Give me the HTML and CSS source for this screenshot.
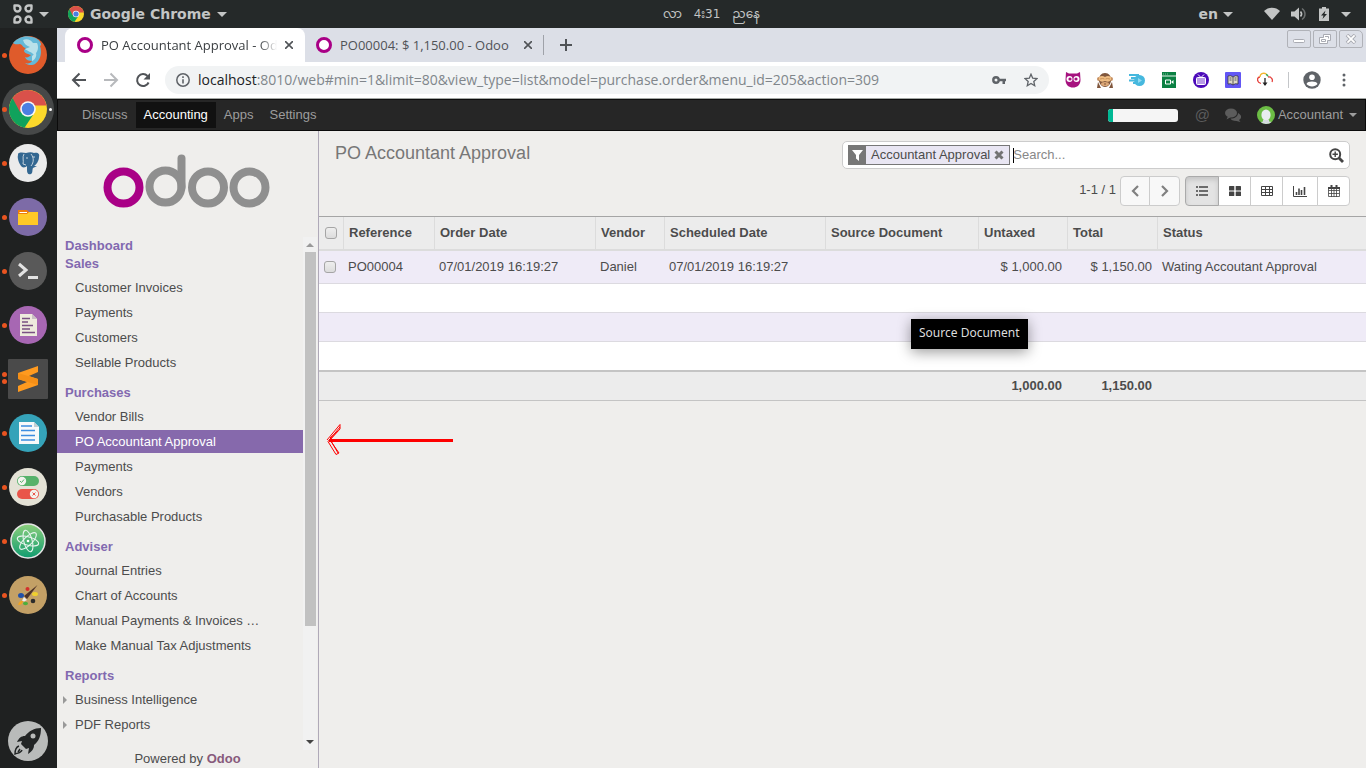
FILE: index.html
```html
<!DOCTYPE html>
<html lang="en">
<head>
<meta charset="utf-8">
<title>PO Accountant Approval - Odoo</title>
<link rel="stylesheet" href="styles.css">
</head>
<body>
<div class="desktop">
  <header class="topbar">
    <div class="topbar-left">
      <button class="sys-btn activities" aria-label="Activities">
        <svg width="20" height="20" viewBox="0 0 20 20" fill="none" stroke="#c3c5c5" stroke-width="2.4" stroke-linejoin="round"><path d="M1.500 1.500h3a3 3 0 1 1-3 3zM18.500 1.500h-3a3 3 0 1 0 3 3zM1.500 18.500h3a3 3 0 1 0-3-3zM18.500 18.500h-3a3 3 0 1 1 3-3z"/></svg>
        <span class="caret"></span>
      </button>
      <button class="sys-btn app-menu">
        <svg width="16" height="16" viewBox="0 0 38 38"><use href="#chrome"/></svg>
        <span>Google Chrome</span>
        <span class="caret"></span>
      </button>
    </div>
    <div class="clock" lang="my"><span>လာ</span><span>4း31</span><span>ညနေ</span></div>
    <div class="topbar-right">
      <button class="sys-btn lang-btn"><span>en</span><span class="caret"></span></button>
      <svg width="16" height="14" viewBox="0 0 16 14"><path d="M0 4C4-.5 12-.5 16 4L8 13z" fill="#c3c5c5"/></svg>
      <svg width="16" height="14" viewBox="0 0 16 14"><path d="M0 4.500h3.500L8 .5v13L3.500 9.500H0z" fill="#c3c5c5"/><path d="M9.500 4.500q2.200 2.500 0 5" fill="none" stroke="#c3c5c5" stroke-width="1.600"/><path d="M11 1.500c4 2.800 4 8.200 0 11" fill="none" stroke="#6c6f6f" stroke-width="1.500"/></svg>
      <svg width="12" height="14" viewBox="0 0 12 14"><path d="M1 1.500h3V0h4v1.500h3V14H1z" fill="#c3c5c5"/><path d="M7.500 3.500L3 8.500h2.500L4.500 12 9 7H6.500z" fill="#252929"/></svg>
      <span class="caret"></span>
    </div>
  </header>

  <nav class="dock" aria-label="Launcher">
    <div class="dock-item"><i class="dot"></i>
      <svg class="dock-icon" viewBox="0 0 38 38"><circle cx="19" cy="19" r="19" fill="#df5b2b"/><path d="M4 7C9 1 17-1 23 1c6 1 9 5 9 8l-1 1c2 6 1 14-5 18-3 2-8 1-10-1 3 1 6 0 7-2-3 0-6-1-7-4 2 1 4 0 6-2-2-1-6-1-7-4 0-1 1-2 2-3-3 0-3-3-6-4-2 0-5 1-7-1z" fill="#64b9d8"/><path d="M14 4c4-2 8 0 10 3l4 0c2 4 1 9-3 12-2-3-7-4-9-6l5-2c-3-1-6-3-7-7zM23 20l4-3c1 3-1 7-4 8z" fill="#b9e1ea"/></svg>
    </div>
    <div class="dock-item active"><i class="dot"></i>
      <svg class="dock-icon" viewBox="0 0 38 38">
        <g id="chrome"><circle cx="19" cy="19" r="19" fill="#fcd92b"/><path d="M19 19L15.500 37.700A19 19 0 0 1 3.500 8z" fill="#10a25c"/><path d="M24 25L15.500 37.700 9 22z" fill="#10a25c"/><path d="M3.500 8A19 19 0 0 1 37.600 15.500H19L11 22z" fill="#d9514a"/><circle cx="19" cy="19" r="7.800" fill="#f7f7f7"/><circle cx="19" cy="19" r="6.200" fill="#4a7fe2"/></g>
      </svg><i class="dot focus"></i>
    </div>
    <div class="dock-item"><i class="dot"></i>
      <svg class="dock-icon" viewBox="0 0 38 38"><circle cx="19" cy="19" r="19" fill="#ebebeb"/><path d="M10 9c3-1 5 0 7 0 3-1 6-1 8 0 4-1 6 1 5 4 0 4-3 8-5 9h3l-4 2c-1 2 0 5-2 6-3 1-4-1-4-4v-4c-1 1-3 2-5 1-3-3-5-9-4-12 0-1 0-2 1-2z" fill="#336791"/><path d="M15 10c-2 3 0 7-1 10l3 1M22 10c3 4 3 8 0 12M17 14h2M24 13h2" fill="none" stroke="#e6ebef" stroke-width=".8"/></svg>
    </div>
    <div class="dock-item"><i class="dot"></i>
      <svg class="dock-icon" viewBox="0 0 38 38"><circle cx="19" cy="19" r="19" fill="#7d6ba7"/><path d="M9 12h9l2 2h9v3H9z" fill="#ef7d0b"/><path d="M9 16h9l2-2h9v13H9z" fill="#ffc927"/><path d="M11 14h7v1h-8z" fill="#fff"/></svg>
    </div>
    <div class="dock-item"><i class="dot"></i>
      <svg class="dock-icon" viewBox="0 0 38 38"><circle cx="19" cy="19" r="19" fill="#595959"/><path d="M10 12l7 6-7 6" fill="none" stroke="#e3e3e3" stroke-width="3"/><path d="M19 24h10v3H19z" fill="#e3e3e3"/></svg>
    </div>
    <div class="dock-item"><i class="dot"></i>
      <svg class="dock-icon" viewBox="0 0 38 38"><circle cx="19" cy="19" r="19" fill="#a767b3"/><path d="M11 8h12l5 5v17H11z" fill="#eeeadd"/><path d="M23 8l5 5h-5z" fill="#c9bfc4"/><path d="M13 12.500h8M13 16h6M13 19.500h11M13 23h8M13 26.500h13" stroke="#7a5083" stroke-width="1.500"/></svg>
    </div>
    <div class="dock-item"><i class="dot pair"></i>
      <svg class="dock-square" viewBox="0 0 40 40"><rect width="40" height="40" rx="1" fill="#4a4a4a"/><path d="M10 14l20-7v6l-9 4 9 3v6l-20 7v-6l9-4-9-3z" fill="#ff9a1f"/><path d="M10 14l20 6v6l-20-6z" fill="#f58f17"/></svg>
    </div>
    <div class="dock-item"><i class="dot"></i>
      <svg class="dock-icon" viewBox="0 0 38 38"><circle cx="19" cy="19" r="19" fill="#35a3b9"/><path d="M10 8h15l5 5v17H10z" fill="#f7f9fa"/><path d="M25 8l5 5h-5z" fill="#c4cfd3"/><path d="M12 12h11M12 16.500h14M12 21.500h14M12 26h14" stroke="#3c8de0" stroke-width="1.300"/></svg>
    </div>
    <div class="dock-item"><i class="dot"></i>
      <svg class="dock-icon" viewBox="0 0 38 38"><circle cx="19" cy="19" r="19" fill="#e4e2d6"/><rect x="8" y="8" width="22" height="10" rx="5" fill="#57b26a"/><circle cx="13" cy="13" r="4.200" fill="#f3f3ee"/><path d="M11 13l1.500 1.500L15 11.500" fill="none" stroke="#57b26a"/><rect x="8" y="21" width="22" height="10" rx="5" fill="#e9554a"/><circle cx="25" cy="26" r="4.200" fill="#f3f3ee"/><path d="M23.500 24.500l3 3m0-3l-3 3" stroke="#e9554a"/></svg>
    </div>
    <div class="dock-item"><i class="dot"></i>
      <svg class="dock-icon" viewBox="0 0 38 38"><defs><linearGradient id="atom" x2="0" y2="1"><stop stop-color="#8ccf7c"/><stop offset="1" stop-color="#109c70"/></linearGradient></defs><circle cx="19" cy="19" r="17" fill="url(#atom)" stroke="#e5e5e5" stroke-width="1.500"/><g fill="none" stroke="#e9f5ef" stroke-width="1.100"><ellipse cx="19" cy="19" rx="11" ry="4.200" transform="rotate(15 19 19)"/><ellipse cx="19" cy="19" rx="11" ry="4.200" transform="rotate(75 19 19)"/><ellipse cx="19" cy="19" rx="11" ry="4.200" transform="rotate(135 19 19)"/></g><circle cx="19" cy="19" r="1.300" fill="#fff"/></svg>
    </div>
    <div class="dock-item"><i class="dot"></i>
      <svg class="dock-icon" viewBox="0 0 38 38"><circle cx="19" cy="19" r="19" fill="#c3a066"/><circle cx="18.500" cy="13" r="2" fill="#d3302c"/><ellipse cx="12" cy="19.500" rx="3" ry="2.500" fill="#2250a8"/><ellipse cx="26" cy="18" rx="3" ry="2" fill="#f0d02e"/><circle cx="24" cy="25" r="2.300" fill="#2b2b2b"/><ellipse cx="16.500" cy="27.500" rx="2.500" ry="1.800" fill="#4caf3c"/><path d="M9 29c1-4 3-4 5-4-1 3-2 4-5 4z" fill="#f2a41e"/><path d="M28.500 9L15 20l3 3z" fill="#4e3328"/><path d="M15 21l3 3-3 1.500-2-1z" fill="#eee"/></svg>
    </div>
    <div class="dock-item dock-last">
      <svg class="dock-square" viewBox="0 0 40 40"><circle cx="20" cy="20" r="20" fill="#b9bbba"/><path d="M33 7c-7 0-12 3-16 8-4 0-6 2-8 6l5-1-1 3 5 5 3-1-1 6c4-3 6-5 6-9 5-4 7-9 7-17z" fill="#222525"/><circle cx="25" cy="15" r="2.500" fill="#b9bbba"/><path d="M11 25c-3 1-4 4-4 8 3-1 6-1 7-4M12 28l-2 3" fill="none" stroke="#222525" stroke-width="1.400"/></svg>
    </div>
  </nav>

  <div class="browser">
    <div class="tabstrip">
      <div class="tab tab-active">
        <i class="favicon"></i><span class="tab-title fade">PO Accountant Approval - Odoo</span>
        <button class="tab-close" aria-label="Close tab"><svg width="8" height="8" viewBox="0 0 8 8"><path d="M0 0l8 8M8 0L0 8" stroke="#505357" stroke-width="1.600"/></svg></button>
      </div>
      <div class="tab tab-second">
        <i class="favicon"></i><span class="tab-title">PO00004: $ 1,150.00 - Odoo</span>
        <button class="tab-close" aria-label="Close tab"><svg width="8" height="8" viewBox="0 0 8 8"><path d="M0 0l8 8M8 0L0 8" stroke="#505357" stroke-width="1.600"/></svg></button>
      </div>
      <button class="new-tab" aria-label="New tab"><svg width="12" height="12" viewBox="0 0 12 12"><path d="M6 0v12M0 6h12" stroke="#505357" stroke-width="2"/></svg></button>
      <div class="win-buttons">
        <button class="win-btn" aria-label="Minimize"><svg width="12" height="10" viewBox="0 0 12 10"><rect x=".5" y="5.500" width="11" height="3" rx="1" fill="#fff" stroke="#a9abb2"/></svg></button>
        <button class="win-btn" aria-label="Restore"><svg width="12" height="10" viewBox="0 0 12 10"><path d="M4.500.5h7v6h-3v3h-8v-6h4z" fill="#fff" stroke="#a9abb2"/><path d="M2.500 5.500h4v2h-4zM6 2.500h3.500v2" fill="none" stroke="#a9abb2"/></svg></button>
        <button class="win-btn win-close" aria-label="Close"><svg width="12" height="10" viewBox="0 0 12 10"><path d="M2 1l8 8M10 1L2 9" stroke="#a9abb2" stroke-width="3.600"/><path d="M2.400 1.400l7.200 7.200M9.600 1.400L2.400 8.600" stroke="#fff" stroke-width="1.800"/></svg></button>
      </div>
    </div>

    <div class="toolbar">
      <button class="tool" aria-label="Back"><svg width="16" height="16" viewBox="0 0 16 16" fill="none" stroke="#505357" stroke-width="2"><path d="M15 8H2M8.500 1.500L2 8l6.500 6.500"/></svg></button>
      <button class="tool" aria-label="Forward"><svg width="16" height="16" viewBox="0 0 16 16" fill="none" stroke="#b7b9bc" stroke-width="2"><path d="M1 8h13M7.500 1.500L14 8l-6.500 6.500"/></svg></button>
      <button class="tool" aria-label="Reload"><svg width="16" height="16" viewBox="0 0 16 16"><path d="M13.600 10.500A6 6 0 1 1 12.500 4" fill="none" stroke="#505357" stroke-width="2"/><path d="M15 1v6.500H8.500z" fill="#505357"/></svg></button>
      <div class="omnibox">
        <svg width="14" height="14" viewBox="0 0 14 14"><circle cx="7" cy="7" r="6.200" fill="none" stroke="#5f6368" stroke-width="1.500"/><path d="M7 6.200v4.300M7 3.200v1.700" stroke="#5f6368" stroke-width="1.600"/></svg>
        <div class="url"><span class="host">localhost</span>:8010/web#min=1&amp;limit=80&amp;view_type=list&amp;model=purchase.order&amp;menu_id=205&amp;action=309</div>
        <svg class="key" width="14" height="10" viewBox="0 0 14 10"><circle cx="4" cy="5" r="2.700" fill="none" stroke="#5f6368" stroke-width="2.400"/><path d="M6 3.700h8v2.600h-1V9h-2.500V6.300H6z" fill="#5f6368"/></svg>
        <svg width="14" height="14" viewBox="0 0 14 14"><path d="M7 1.200l1.700 4 4.300.4-3.200 2.900.9 4.200L7 10.500l-3.700 2.200.9-4.200L1 5.600l4.300-.4z" fill="none" stroke="#5f6368" stroke-width="1.300"/></svg>
      </div>
      <button class="tool" aria-label="Odoo debug"><svg width="16" height="16" viewBox="0 0 16 16"><path d="M1 0l3 1.500h8L15 0l.5 8c0 5-3.500 7.500-7.500 7.500S.5 13 .5 8z" fill="#a6127f"/><circle cx="4.500" cy="7" r="3" fill="#fff"/><circle cx="11.500" cy="7" r="3" fill="#fff"/><circle cx="5" cy="7" r="1.600" fill="#a6127f"/><circle cx="11" cy="7" r="1.600" fill="#a6127f"/></svg></button>
      <button class="tool" aria-label="Monkey"><svg width="16" height="16" viewBox="0 0 16 16"><circle cx="2" cy="7" r="2" fill="#c79162"/><circle cx="14" cy="7" r="2" fill="#c79162"/><path d="M8 1c4 0 6 3 6 7s-3 7-6 7-6-3-6-7 2-7 6-7z" fill="#80573d"/><path d="M2 5q3-2 6 0 3-2 6 0v3q-2 3-6 1-4 2-6-1z" fill="#efbd83"/><path d="M3 7q3-1 4.500 0M13 7q-3-1-4.500 0" fill="none" stroke="#c89158"/><ellipse cx="8" cy="12" rx="4" ry="2" fill="#dba777"/><path d="M7 12h2" stroke="#80573d"/><path d="M1 10l3 6H0zM15 10l-3 6h4z" fill="#80573d"/></svg></button>
      <button class="tool" aria-label="Video speed"><svg width="16" height="14" viewBox="0 0 16 14"><circle cx="10.500" cy="7.500" r="5.500" fill="#46b8de"/><path d="M0 2h10M2 5h6M0 7.500h5M4 10h5" stroke="#46b8de" stroke-width="1.800"/><path d="M9 5l4 2.500L9 10z" fill="#8fd9f0"/></svg></button>
      <button class="tool" aria-label="Screen recorder"><svg width="16" height="16" viewBox="0 0 16 16"><path d="M1 0h14v16H1z" fill="#0b8043"/><path d="M1 4h14" stroke="#e8f3ec"/><path d="M2 2h5" stroke="#7fbd9a" stroke-dasharray="1 1"/><path d="M4.500 8h5v4h-5z" fill="none" stroke="#fff"/><path d="M10 10l2.500-2v4z" fill="#fff"/></svg></button>
      <button class="tool" aria-label="Video"><svg width="16" height="16" viewBox="0 0 16 16"><circle cx="8" cy="8" r="8" fill="#4b09b9"/><rect x="3.500" y="5.500" width="9" height="7" rx="1" fill="#b79be6" stroke="#fff"/><path d="M5 2.500L8 5.500l3-3" fill="none" stroke="#fff"/></svg></button>
      <button class="tool" aria-label="Dictionary"><svg width="16" height="16" viewBox="0 0 16 16"><rect width="16" height="16" rx="1" fill="#6256f4"/><path d="M3 4q3-1 5 1 2-2 5-1v8q-3-1-5 1-2-2-5-1z" fill="#ded9c7" stroke="#35323f" stroke-width=".8"/><path d="M8 5v8M4.500 6h2M4.500 8h2M9.500 6h2M9.500 8h2" stroke="#35323f" stroke-width=".8"/></svg></button>
      <button class="tool" aria-label="Downloads"><svg width="16" height="16" viewBox="0 0 16 16" fill="none" stroke-width="1.300"><path d="M4 11.500C-1 10 0 5 3 5" stroke="#e5413c"/><path d="M3 5c0-4 5-5 7-2" stroke="#f4b731"/><path d="M9 2.500q2 .5 2 2" stroke="#35a852"/><path d="M11 5c4-.5 5 3 4 5" stroke="#e5413c"/><path d="M8 6v7" stroke="#222"/><path d="M5.500 10.500h5L8 14z" fill="#222"/></svg></button>
      <i class="tool-sep"></i>
      <button class="tool" aria-label="Profile"><svg width="18" height="18" viewBox="0 0 18 18"><circle cx="9" cy="9" r="8.700" fill="#5f6368"/><circle cx="9" cy="6.200" r="2.800" fill="#fff"/><path d="M3.500 13c1-3.200 10-3.200 11 0-2.500 3.300-8.500 3.300-11 0z" fill="#fff"/></svg></button>
      <button class="tool" aria-label="Menu"><svg width="4" height="14" viewBox="0 0 4 14" fill="#5f6368"><circle cx="2" cy="2" r="1.500"/><circle cx="2" cy="7" r="1.500"/><circle cx="2" cy="12" r="1.500"/></svg></button>
    </div>

    <div class="odoo">
      <nav class="navbar">
        <a href="#">Discuss</a><a href="#" class="current">Accounting</a><a href="#">Apps</a><a href="#">Settings</a>
        <div class="navbar-right">
          <div class="planner" role="progressbar" aria-label="Setup" aria-valuenow="7"><i></i></div>
          <button class="nav-at" aria-label="Mentions">@</button>
          <button class="nav-chat" aria-label="Conversations"><svg width="16" height="14" viewBox="0 0 16 14" fill="#5c5c5c"><ellipse cx="6" cy="5" rx="6" ry="4.500"/><path d="M3 8l-1.500 3.500L6 9zM13 5c4 2 4 5 1 7l1.500 2-4-1C8 13 6 12 5.500 10.500 10 10.500 13 8.500 13 5z"/></svg></button>
          <button class="user">
            <svg width="18" height="18" viewBox="0 0 18 18"><defs><clipPath id="ava"><circle cx="9" cy="9" r="9"/></clipPath></defs><g clip-path="url(#ava)"><path d="M0 0h18v18H0z" fill="#6cbd45"/><ellipse cx="9" cy="9" rx="4.600" ry="5.600" fill="#e9edf0"/><path d="M6 14h6v1.500c3 .5 4 1 4 2.500H2c0-1.500 1-2 4-2.500z" fill="#d5dbe0"/></g></svg>
            <span>Accountant</span><span class="caret small"></span>
          </button>
        </div>
      </nav>

      <div class="odoo-body">
        <aside class="sidebar">
          <div class="logo">
            <svg width="168" height="54" viewBox="0 0 168 54" fill="none" stroke="#8f8f8f" stroke-width="8" role="img" aria-label="odoo"><circle cx="20.500" cy="33.500" r="16" stroke="#a90086"/><circle cx="62.500" cy="32.500" r="16"/><path d="M78.500 33V4.500" stroke-linecap="round"/><circle cx="105" cy="33.500" r="16"/><circle cx="146.500" cy="33.500" r="16"/></svg>
          </div>
          <div class="menu-wrap">
            <div class="menu">
              <h2>Dashboard</h2>
              <h2>Sales</h2>
              <ul>
                <li><a href="#">Customer Invoices</a></li>
                <li><a href="#">Payments</a></li>
                <li><a href="#">Customers</a></li>
                <li><a href="#">Sellable Products</a></li>
              </ul>
              <h2>Purchases</h2>
              <ul>
                <li><a href="#">Vendor Bills</a></li>
                <li><a href="#" class="selected">PO Accountant Approval</a></li>
                <li><a href="#">Payments</a></li>
                <li><a href="#">Vendors</a></li>
                <li><a href="#">Purchasable Products</a></li>
              </ul>
              <h2>Adviser</h2>
              <ul>
                <li><a href="#">Journal Entries</a></li>
                <li><a href="#">Chart of Accounts</a></li>
                <li><a href="#">Manual Payments &amp; Invoices …</a></li>
                <li><a href="#">Make Manual Tax Adjustments</a></li>
              </ul>
              <h2>Reports</h2>
              <ul>
                <li><a href="#" class="parent">Business Intelligence</a></li>
                <li><a href="#" class="parent">PDF Reports</a></li>
              </ul>
            </div>
            <div class="scrollbar">
              <i class="arrow-up"></i><i class="thumb"></i><i class="arrow-down"></i>
            </div>
          </div>
          <footer class="powered">Powered by <a href="#">Odoo</a></footer>
        </aside>

        <main class="content">
          <svg class="pointer" width="128" height="34" viewBox="0 0 128 34" fill="none" stroke="#fe0000"><path d="M3 17.500h124" stroke-width="3"/><path d="M1 17L14 1.500V6L4 17l9 13-3 1.500L2 18.500 14 4M4 15L12 8M5 18l7 12"/></svg>
          <section class="control-panel">
            <h1>PO Accountant Approval</h1>
            <div class="controls">
              <div class="search">
                <div class="facet">
                  <span class="facet-icon"><svg width="11" height="11" viewBox="0 0 11 11"><path d="M0 0h11L7 5v6L4 8.500V5z" fill="#fff"/></svg></span>
                  <span class="facet-label">Accountant Approval</span>
                  <button class="facet-x" aria-label="Remove filter"><svg width="10" height="10" viewBox="0 0 10 10"><path d="M1.500 1.500l7 7M8.500 1.500l-7 7" stroke="#737373" stroke-width="3"/></svg></button>
                </div>
                <i class="cursor"></i>
                <input type="text" placeholder="Search..." aria-label="Search">
                <button class="search-more" aria-label="Advanced search"><svg width="15" height="15" viewBox="0 0 15 15" fill="none" stroke="#444"><circle cx="6.200" cy="6.200" r="5" stroke-width="2"/><path d="M10 10l4 4" stroke-width="2.800"/><path d="M6.200 3.500v5.400M3.500 6.200h5.400" stroke-width="1.400"/></svg></button>
              </div>
              <div class="pager-row">
                <span class="pager">1-1 / 1</span>
                <div class="group pager-btns">
                  <button aria-label="Previous"><svg width="8" height="12" viewBox="0 0 8 12"><path d="M7 1L2 6l5 5" fill="none" stroke="#808080" stroke-width="2.200"/></svg></button>
                  <button aria-label="Next"><svg width="8" height="12" viewBox="0 0 8 12"><path d="M1 1l5 5-5 5" fill="none" stroke="#808080" stroke-width="2.200"/></svg></button>
                </div>
                <div class="group views">
                  <button class="on" aria-label="List"><svg width="12" height="10" viewBox="0 0 12 10"><path d="M0 1h2M3 1h9M0 5h2M3 5h9M0 9h2M3 9h9" stroke="#444" stroke-width="1.600"/></svg></button>
                  <button aria-label="Kanban"><svg width="12" height="10" viewBox="0 0 12 10" fill="#444"><rect width="5.300" height="4.500" rx=".6"/><rect x="6.700" width="5.300" height="4.500" rx=".6"/><rect y="5.500" width="5.300" height="4.500" rx=".6"/><rect x="6.700" y="5.500" width="5.300" height="4.500" rx=".6"/></svg></button>
                  <button aria-label="Pivot"><svg width="12" height="10" viewBox="0 0 12 10"><path d="M.5.5h11v9H.5zM.5 3.500h11M.5 6.500h11M4.500.5v9M8.500.5v9" fill="none" stroke="#444"/></svg></button>
                  <button aria-label="Graph"><svg width="14" height="11" viewBox="0 0 14 11"><path d="M.5 0v10.500H14" fill="none" stroke="#444"/><path d="M3.500 9V6M6 9V2.500M8.500 9V4M11.500 9V1" stroke="#444" stroke-width="1.600"/></svg></button>
                  <button aria-label="Calendar"><svg width="12" height="12" viewBox="0 0 12 12"><path d="M.5 2.500h11v9H.5zM.5 5.500h11M.5 8.500h11M3.500 4v8M6 4v8M8.500 4v8" fill="none" stroke="#444" stroke-width=".8"/><path d="M0 2h12v2H0zM2.500 0h2v2h-2zM7.500 0h2v2h-2z" fill="#444"/></svg></button>
                </div>
              </div>
            </div>
          </section>
          <div class="list">
            <table>
              <colgroup><col class="c-check"><col class="c-ref"><col class="c-date"><col class="c-vendor"><col class="c-date"><col class="c-source"><col class="c-untaxed"><col class="c-total"><col></colgroup>
              <thead>
                <tr><th class="check"><input type="checkbox" aria-label="Select all"></th><th>Reference</th><th>Order Date</th><th>Vendor</th><th>Scheduled Date</th><th>Source Document</th><th>Untaxed</th><th>Total</th><th>Status</th></tr>
              </thead>
              <tbody>
                <tr class="record"><td class="check"><input type="checkbox" aria-label="Select PO00004"></td><td>PO00004</td><td>07/01/2019 16:19:27</td><td>Daniel</td><td>07/01/2019 16:19:27</td><td></td><td class="num">$ 1,000.00</td><td class="num">$ 1,150.00</td><td>Wating Accoutant Approval</td></tr>
                <tr><td colspan="9"></td></tr>
                <tr><td colspan="9"></td></tr>
                <tr><td colspan="9"></td></tr>
              </tbody>
              <tfoot>
                <tr><td></td><td></td><td></td><td></td><td></td><td></td><td class="num">1,000.00</td><td class="num">1,150.00</td><td></td></tr>
              </tfoot>
            </table>
            <div class="tooltip" role="tooltip">Source Document</div>
          </div>
        </main>
      </div>
    </div>
  </div>
</div>
</body>
</html>
```
FILE: styles.css
```css
* { box-sizing: border-box; }
body { margin: 0; font: 13px/18px "Liberation Sans", Arial, sans-serif; color: #4c4c4c; }
button { padding: 0; border: 0; background: none; font: inherit; color: inherit; display: flex; align-items: center; justify-content: center; }
svg { display: block; flex: none; }
a { color: inherit; text-decoration: none; }

.desktop { display: grid; grid-template: 28px 1fr / 57px 1fr; height: 100vh; min-height: 640px; overflow: hidden; background: #1f2121; }

/* system bar */
.topbar { grid-column: 1 / 3; display: grid; grid-template-columns: 1fr auto 1fr; align-items: center; background: #252929; color: #c3c5c5; font: bold 14px/18px "DejaVu Sans", sans-serif; }
.topbar-left, .topbar-right { display: flex; align-items: center; }
.topbar-left { padding-left: 13px; gap: 19px; }
.topbar-right { justify-content: flex-end; gap: 11px; padding-right: 15px; }
.sys-btn { gap: 6px; }
.lang-btn { margin-right: 20px; gap: 5px; }
.caret { width: 0; height: 0; border: 5px solid transparent; border-top-color: #c3c5c5; border-bottom: 0; }
.caret.small { border-width: 4px 4px 0; border-top-color: #9d9d9d; }
.clock { display: flex; gap: 12px; padding-left: 57px; font: 12px/18px "DejaVu Sans", "Noto Sans Myanmar", sans-serif; }

/* launcher */
.dock { display: flex; flex-direction: column; }
.dock-item { position: relative; height: 54px; flex: none; display: flex; align-items: center; justify-content: center; padding-right: 1px; }
.dock-last { margin-top: auto; }
.dock-icon { width: 38px; height: 38px; position: relative; }
.dock-square { width: 40px; height: 40px; }
.dot { position: absolute; left: 2px; width: 5px; height: 5px; border-radius: 50%; background: #e95420; }
.dot.pair { top: 20px; box-shadow: 0 7px #e95420; }
.dot.focus { left: auto; right: 5px; width: 3px; height: 3px; background: #fff; }
.dock-item.active::before { content: ""; position: absolute; left: 2px; top: 1px; width: 52px; height: 52px; border-radius: 50%; background: #464848; }

/* browser chrome */
.browser { display: flex; flex-direction: column; min-width: 0; min-height: 0; background: #fff; }
.tabstrip { display: flex; height: 34px; flex: none; align-items: center; padding-left: 8px; background: #dcdfe7; color: #505357; font: 13px/18px "Open Sans", sans-serif; }
.tab { display: flex; align-items: center; width: 240px; height: 34px; padding: 0 12px; }
.tab-active { background: #fff; border-radius: 8px 8px 0 0; color: #3c4043; }
.tab-second { width: 238px; padding: 0 11px; }
.favicon { width: 16px; height: 16px; flex: none; border: 3px solid #a90086; border-radius: 50%; background: #fff; }
.tab-title { flex: 1; margin: 0 8px; white-space: nowrap; overflow: hidden; }
.fade { -webkit-mask-image: linear-gradient(90deg, #000 90%, transparent); mask-image: linear-gradient(90deg, #000 90%, transparent); }
.tab-close { width: 8px; height: 16px; }
.new-tab { height: 20px; padding-left: 16px; border-left: 1px solid #9fa2a9; }
.win-buttons { display: flex; gap: 2px; margin: 0 3px 12px auto; }
.win-btn { width: 24px; height: 18px; border: 1px solid #b0b2b8; border-radius: 2px; }
.win-close { border-top-right-radius: 5px; }
.toolbar { display: flex; align-items: center; height: 37px; flex: none; padding: 0 6px; border-bottom: 1px solid #a3a7a4; }
.tool { width: 32px; height: 32px; flex: none; }
.tool-sep { width: 1px; height: 16px; margin: 0 7px; background: #c4c6c9; }
.omnibox { flex: 1; min-width: 0; display: flex; align-items: center; gap: 8px; height: 28px; margin: 0 8px 0 6px; padding: 0 11px; border-radius: 14px; background: #f1f3f4; color: #80868b; font: 14px/20px "Open Sans", sans-serif; }
.url { flex: 1; white-space: nowrap; overflow: hidden; }
.host { color: #202124; }
.key { margin-right: 10px; }

/* application */
.odoo { flex: 1; min-height: 0; display: flex; flex-direction: column; background: #efeeec; }
.navbar { display: flex; align-items: center; height: 32px; flex: none; padding: 0 8px 0 16px; border: 1px solid #0b0b0b; background: #262626; color: #9d9d9d; }
.navbar > a { padding: 4px 8px; }
.navbar > .current { background: #111; color: #fff; }
.navbar-right { margin-left: auto; display: flex; align-items: center; }
.planner { width: 70px; height: 13px; border-radius: 3px; background: #f5f5f5; overflow: hidden; }
.planner i { display: block; width: 5px; height: 13px; background: #00b894; }
.nav-at { margin-left: 17px; color: #5c5c5c; font-size: 15px; }
.nav-chat { margin: 0 16px 0 15px; }
.user { gap: 3px; }
.user .caret { margin-left: 3px; }
.odoo-body { flex: 1; min-height: 0; display: flex; }
.sidebar { width: 262px; flex: none; display: flex; flex-direction: column; border-right: 1px solid #afa9b8; }
.logo { padding: 23px 0 29px 46px; }
.menu-wrap { flex: 1; min-height: 0; display: flex; padding-right: 1px; }
.menu { flex: 1; min-width: 0; overflow: hidden; }
.menu h2 { margin: 0; padding-left: 8px; font-size: 13px; line-height: 18px; color: #8269b0; }
.menu ul { list-style: none; margin: 3px 0 10px; padding: 0; display: grid; gap: 2px; }
.menu a { display: flex; align-items: center; height: 23px; padding-left: 18px; white-space: nowrap; }
.menu .selected { background: #8669ac; color: #fff; }
.menu .parent { gap: 8px; padding-left: 6px; }
.parent::before { content: ""; border: 4px solid transparent; border-left-color: #999; border-right: 0; }
.scrollbar { width: 14px; display: flex; flex-direction: column; align-items: center; background: #f1f1f1; }
.scrollbar i { flex: none; }
.arrow-up { margin: 6px 0 5px; border: 4px solid transparent; border-bottom-color: #999; border-top: 0; }
.thumb { width: 11px; height: 73%; background: #c1c1c1; }
.arrow-down { margin: auto 0 6px; border: 4px solid transparent; border-top-color: #444; border-bottom: 0; }
.powered { text-align: center; }
.powered a { font-weight: bold; color: #875a7b; }

.content { position: relative; flex: 1; min-width: 0; }
.control-panel { display: flex; justify-content: space-between; align-items: flex-start; padding: 10px 16px; height: 85px; }
.control-panel h1 { margin: 0; font-size: 18px; font-weight: normal; line-height: 24px; color: #777; }
.controls { flex: 0 0 508px; }
.search { display: flex; align-items: center; height: 28px; padding: 0 5px; border: 1px solid #ccc; border-radius: 5px; background: #fff; }
.facet { display: flex; align-items: center; height: 20px; border: 1px solid #777; background: #e9e6f3; }
.facet-icon { display: flex; align-items: center; justify-content: center; width: 17px; height: 18px; background: #777; }
.facet-label { padding: 0 4px 0 5px; white-space: nowrap; }
.facet-x { width: 10px; margin-right: 5px; }
.cursor { width: 1px; height: 15px; margin-left: 3px; margin-right: -1px; background: #000; }
.search input { flex: 1; min-width: 0; padding: 0; border: 0; outline: 0; background: none; font: inherit; }
.search input::placeholder { color: #888; }
.pager-row { display: flex; align-items: center; justify-content: flex-end; margin-top: 7px; }
.pager { margin-right: 4px; margin-bottom: 2px; }
.group { display: flex; }
.group button { height: 30px; border: 1px solid #ccc; background: #fff; width: 33px; margin-left: -1px; }
.group button:first-child { border-radius: 4px 0 0 4px; margin-left: 0; }
.group button:last-child { border-radius: 0 4px 4px 0; }
.pager-btns { margin-right: 5px; }
.pager-btns button { width: 31px; background: #f8f8f8; }
.pager-btns button:first-child { width: 30px; }
.views .on { width: 34px; background: #e3e3e3; border-color: #aaa; box-shadow: inset 0 3px 5px #0002; z-index: 1; }
.views button:nth-child(4) { width: 36px; }

.list { position: relative; border-top: 1px solid #a5a5a5; }
table { width: 100%; table-layout: fixed; border-collapse: separate; border-spacing: 0; }
.c-check { width: 25px; } .c-ref { width: 91px; } .c-date { width: 161px; } .c-vendor { width: 69px; }
.c-source { width: 153px; } .c-untaxed { width: 89px; } .c-total { width: 90px; }
th { height: 34px; padding: 0 5px; text-align: left; background: #ececec; border-bottom: 2px solid #dcdcdc; border-right: 1px solid #dcdcdc; white-space: nowrap; }
th:last-child { border-right: 0; }
td { height: 29px; padding: 0 6px 0 4px; border-bottom: 1px solid #dcdae0; white-space: nowrap; background: #fff; }
.record td { height: 33px; }
tbody tr:nth-child(odd) td { background: #efebf7; }
tbody tr:last-child td { height: 28px; border: 0; }
tfoot td { height: 31px; background: #ececec; border-top: 2px solid #c4c4c4; border-bottom: 1px solid #c4c4c4; font-weight: bold; }
.num { text-align: right; }
td.check { padding: 0 0 0 5px; }
th.check { padding: 0 0 0 6px; }
.check input { appearance: none; display: block; margin: 0; width: 12px; height: 12px; border: 1px solid #a5a5a5; border-radius: 3px; background: linear-gradient(#eee, #dcdcdc); }
.tooltip { position: absolute; left: 592px; top: 102px; padding: 5px 8px 7px; background: #000; color: #ddd; font: 12px/18px "Noto Sans", sans-serif; box-shadow: 0 3px 14px #0006; }
.pointer { position: absolute; left: 7px; top: 292px; }
```
